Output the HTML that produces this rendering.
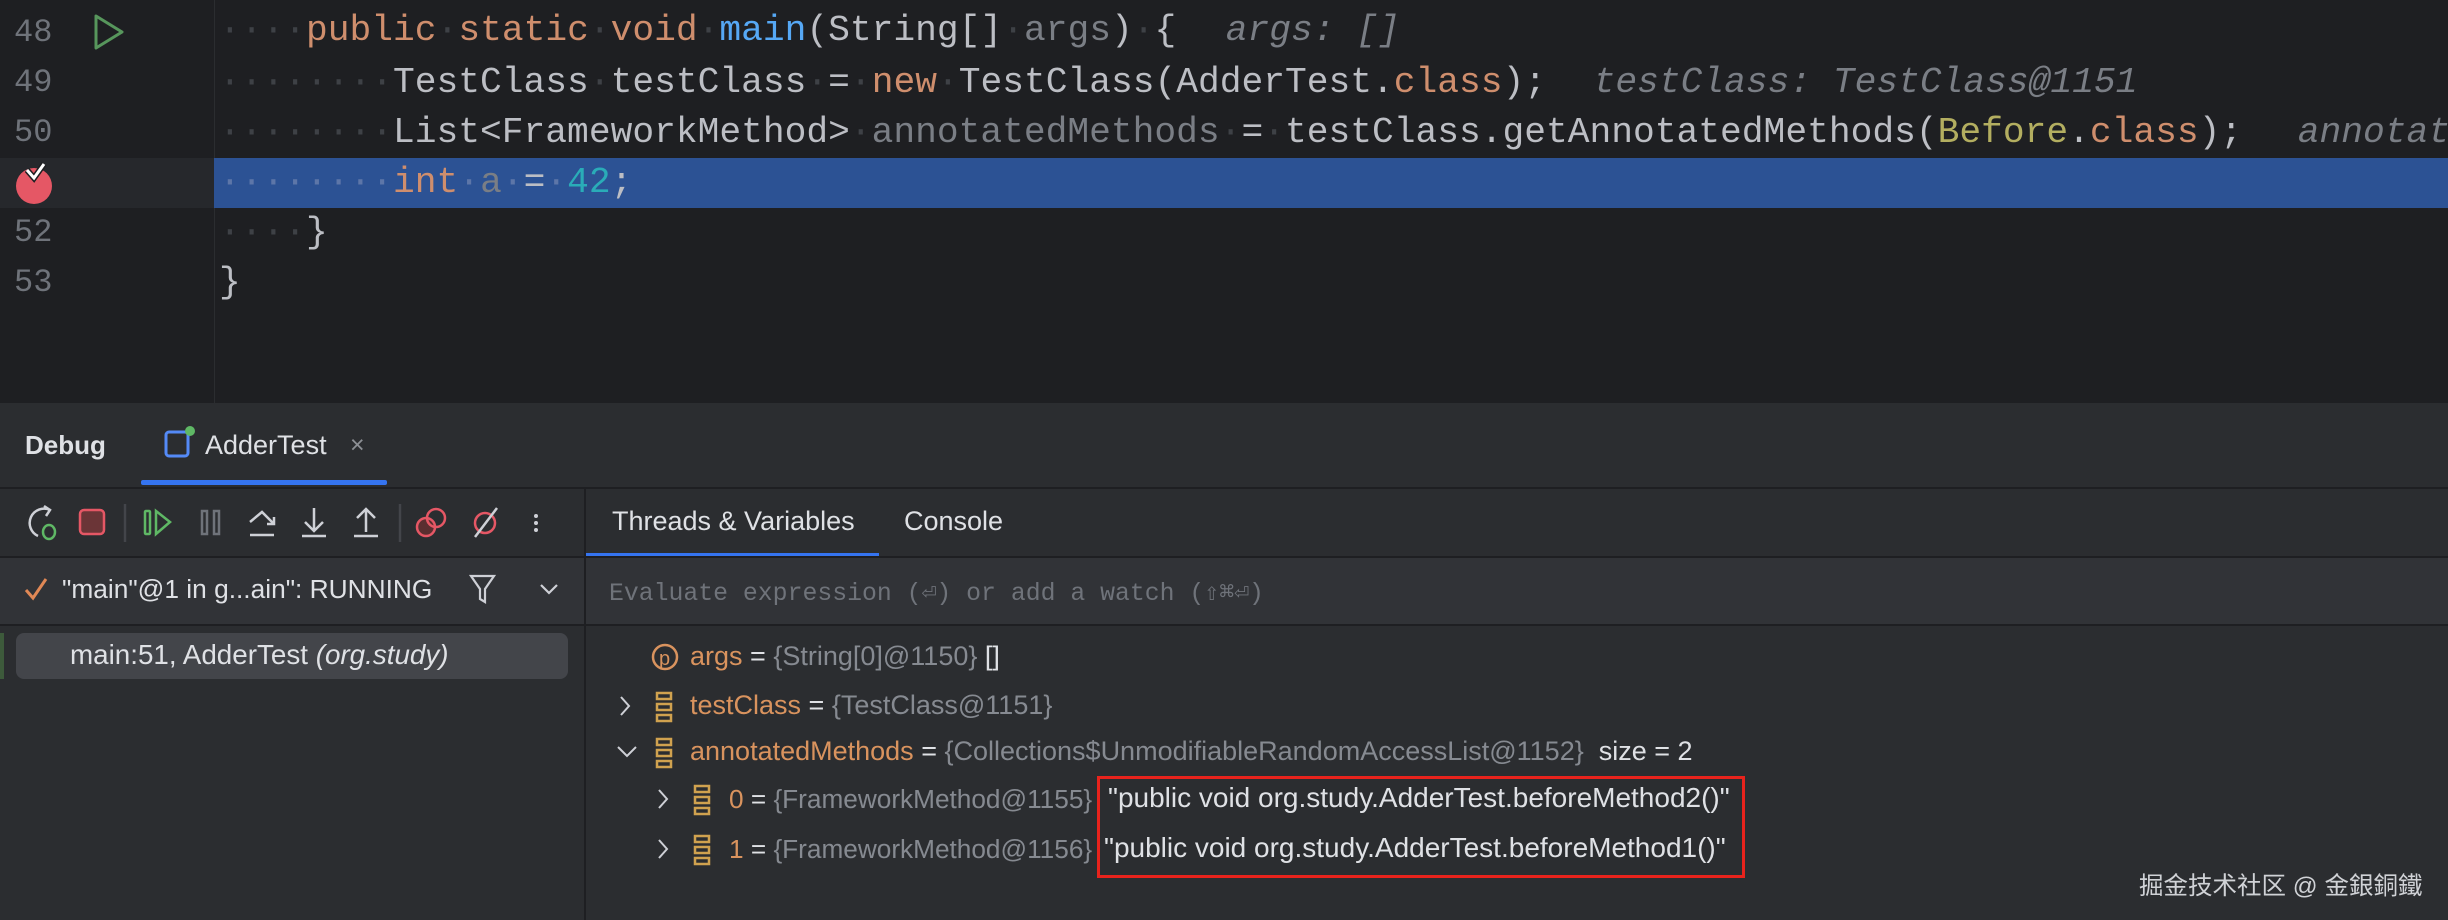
<!DOCTYPE html>
<html><head><meta charset="utf-8"><style>
*{margin:0;padding:0;box-sizing:border-box}
body{width:2448px;height:920px;background:#2b2d30;position:relative;overflow:hidden;font-family:"Liberation Sans","Noto Sans CJK SC",sans-serif}
.ed{position:absolute;left:0;top:0;width:2448px;height:403px;background:#1e1f22;overflow:hidden}
.code{position:absolute;left:219px;font-family:"Liberation Mono",monospace;font-size:36.25px;color:#bcbec4;white-space:pre;line-height:50px;height:50px}
.ln{position:absolute;left:14px;font-family:"Liberation Mono",monospace;font-size:32px;color:#6f737a;line-height:50px}
.k{color:#cf8e6d}.m{color:#56a8f5}.g{color:#7a7e85}.n{color:#2aacb8}.d{color:#3e4146}.h{color:#7a7e85;font-style:italic}.y{color:#b3ae60}
.abs{position:absolute}
.t{position:absolute;font-size:27px;color:#dfe1e5;white-space:nowrap}
.vt{font-size:27px}
.o{color:#d9935e}.v{color:#868a91}
</style></head><body>
<div class="ed">
<div class="abs" style="left:214px;top:0;width:1px;height:403px;background:#2b2d30"></div>
<div class="abs" style="left:214px;top:158px;width:2234px;height:50px;background:#2c5294"></div>
<div class="abs" style="left:0;top:158px;width:214px;height:50px;background:#26282c"></div>
<div class="ln" style="top:8px">48</div>
<div class="ln" style="top:58px">49</div>
<div class="ln" style="top:108px">50</div>
<div class="ln" style="top:208px">52</div>
<div class="ln" style="top:258px">53</div>
<svg class="abs" style="left:92px;top:13px" width="34" height="38"><path d="M4 3 L30 19 L4 35 Z" fill="none" stroke="#57965c" stroke-width="3" stroke-linejoin="round"/></svg>
<svg class="abs" style="left:14px;top:160px" width="44" height="46"><circle cx="20" cy="26" r="18" fill="#e55765"/><path d="M13 10 L20 18 L30 4" fill="none" stroke="#1e1f22" stroke-width="6"/><path d="M13 10 L20 18 L30 4" fill="none" stroke="#fff" stroke-width="3"/></svg>
<div class="code" style="top:6px"><span class="d">····</span><span class="k">public</span><span class="d">·</span><span class="k">static</span><span class="d">·</span><span class="k">void</span><span class="d">·</span><span class="m">main</span>(String[]<span class="d">·</span><span class="g">args</span>)<span class="d">·</span>{  <span class="h" style="margin-left:6px">args: []</span></div>
<div class="code" style="top:58px"><span class="d">········</span>TestClass<span class="d">·</span>testClass<span class="d">·</span>=<span class="d">·</span><span class="k">new</span><span class="d">·</span>TestClass(AdderTest.<span class="k">class</span>);  <span class="h" style="margin-left:4px">testClass: TestClass@1151</span></div>
<div class="code" style="top:108px"><span class="d">········</span>List&lt;FrameworkMethod&gt;<span class="d">·</span><span class="g">annotatedMethods</span><span class="d">·</span>=<span class="d">·</span>testClass.getAnnotatedMethods(<span class="y">Before</span>.<span class="k">class</span>);  <span class="h" style="margin-left:12px">annotatedMethods</span></div>
<div class="code" style="top:158px"><span style="color:#5d76a8">········</span><span class="k">int</span><span style="color:#5d76a8">·</span><span class="g">a</span><span style="color:#5d76a8">·</span>=<span style="color:#5d76a8">·</span><span class="n">42</span>;</div>
<div class="code" style="top:208px"><span class="d">····</span>}</div>
<div class="code" style="top:258px">}</div>
</div>
<div class="t" style="left:25px;top:430px;font-weight:bold;font-size:26px">Debug</div>
<svg class="abs" style="left:163px;top:424px" width="34" height="36"><rect x="3" y="8" width="22" height="24" rx="3" fill="none" stroke="#548af7" stroke-width="3"/><circle cx="27" cy="7" r="5" fill="#5fb865"/></svg>
<div class="t" style="left:205px;top:430px">AdderTest</div>
<div class="t" style="left:350px;top:431px;color:#8c8f94;font-size:25px">×</div>
<div class="abs" style="left:141px;top:480px;width:246px;height:5px;background:#3574f0;border-radius:2px"></div>
<div class="abs" style="left:0;top:487px;width:2448px;height:2px;background:#1e1f22"></div>
<svg class="abs" style="left:22px;top:502px" width="560" height="42" fill="none" stroke-width="2.5">
<path d="M28 8 A12 12 0 1 0 16 34" stroke="#ced0d6"/><path d="M22 4 L28 8 L24 14" stroke="#ced0d6"/><ellipse cx="27" cy="30" rx="6" ry="7" stroke="#5fb865"/>
<rect x="58" y="8" width="24" height="24" rx="4" fill="#6b3537" stroke="#e55765"/>
<line x1="103" y1="2" x2="103" y2="40" stroke="#43454a"/>
<rect x="123" y="9" width="5" height="23" rx="1" stroke="#5fb865"/><path d="M134 9 L148 20 L134 32 Z" stroke="#5fb865"/>
<rect x="180" y="9" width="5" height="23" stroke="#6f737a"/><rect x="192" y="9" width="5" height="23" stroke="#6f737a"/>
<path d="M228 20 L240 10 L252 22 M252 15 L252 22 L245 22 M228 33 L252 33" stroke="#ced0d6"/>
<path d="M292 6 L292 28 M283 20 L292 29 L301 20 M280 34 L304 34" stroke="#ced0d6"/>
<path d="M344 8 L344 30 M335 16 L344 7 L353 16 M332 34 L356 34" stroke="#ced0d6"/>
<line x1="378" y1="2" x2="378" y2="40" stroke="#43454a"/>
<circle cx="404" cy="25" r="9" fill="#5a2e30" stroke="#e55765"/><circle cx="414" cy="16" r="9" stroke="#e55765"/>
<circle cx="463" cy="21" r="10" stroke="#e55765"/><line x1="453" y1="35" x2="475" y2="6" stroke="#ced0d6"/>
<circle cx="514" cy="14" r="2" fill="#ced0d6" stroke="none"/><circle cx="514" cy="21" r="2" fill="#ced0d6" stroke="none"/><circle cx="514" cy="28" r="2" fill="#ced0d6" stroke="none"/>
</svg>
<div class="t" style="left:612px;top:506px">Threads &amp; Variables</div>
<div class="t" style="left:904px;top:506px">Console</div>
<div class="abs" style="left:586px;top:553px;width:293px;height:4px;background:#3574f0"></div>
<div class="abs" style="left:0;top:556px;width:2448px;height:2px;background:#1e1f22"></div>
<div class="abs" style="left:0;top:558px;width:584px;height:66px;background:#313337"></div>
<div class="abs" style="left:586px;top:558px;width:1862px;height:66px;background:#313337"></div>
<div class="abs" style="left:584px;top:489px;width:2px;height:431px;background:#1e1f22"></div>
<div class="abs" style="left:0;top:624px;width:2448px;height:2px;background:#1e1f22"></div>
<svg class="abs" style="left:22px;top:574px" width="30" height="30"><path d="M4 16 L11 24 L24 5" fill="none" stroke="#e08855" stroke-width="3"/></svg>
<div class="t" style="left:62px;top:574px;font-size:26.3px">"main"@1 in g...ain": RUNNING</div>
<svg class="abs" style="left:468px;top:572px" width="30" height="34"><path d="M3 4 L26 4 L17 17 L17 30 L12 27 L12 17 Z" fill="none" stroke="#ced0d6" stroke-width="2.2"/></svg>
<svg class="abs" style="left:538px;top:580px" width="22" height="18"><path d="M3 5 L11 13 L19 5" fill="none" stroke="#ced0d6" stroke-width="2.2"/></svg>
<div class="abs" style="left:609px;top:577px;font-family:'Liberation Mono',monospace;font-size:24.8px;color:#6f737a;white-space:pre">Evaluate expression (⏎) or add a watch (⇧⌘⏎)</div>
<div class="abs" style="left:16px;top:633px;width:552px;height:46px;background:#43454a;border-radius:8px"></div>
<div class="abs" style="left:0;top:633px;width:4px;height:46px;background:#3d5a3b"></div>
<div class="t" style="left:70px;top:639px;font-size:27.8px">main:51, AdderTest <i>(org.study)</i></div>
<svg class="abs" style="left:650px;top:640px" width="32" height="34"><circle cx="15" cy="17" r="12" fill="none" stroke="#d9935e" stroke-width="2.5"/><text x="9" y="25" font-size="20" fill="#d9935e" font-family="Liberation Sans">p</text></svg>
<div class="t vt" style="left:690px;top:641px"><span class="o">args</span> = <span class="v">{String[0]@1150}</span> []</div>
<svg class="abs" style="left:616px;top:693px" width="20" height="26"><path d="M5 4 L13 13 L5 22" fill="none" stroke="#ced0d6" stroke-width="2"/></svg>
<svg class="abs" style="left:653px;top:690px" width="24" height="34"><g fill="none" stroke="#d0a24f" stroke-width="2.5"><rect x="4" y="3" width="14" height="6"/><rect x="4" y="14" width="14" height="6"/><rect x="4" y="25" width="14" height="6"/></g></svg>
<div class="t vt" style="left:690px;top:690px"><span class="o">testClass</span> = <span class="v">{TestClass@1151}</span></div>
<svg class="abs" style="left:614px;top:742px" width="26" height="20"><path d="M4 5 L13 14 L22 5" fill="none" stroke="#ced0d6" stroke-width="2"/></svg>
<svg class="abs" style="left:653px;top:736px" width="24" height="34"><g fill="none" stroke="#d0a24f" stroke-width="2.5"><rect x="4" y="3" width="14" height="6"/><rect x="4" y="14" width="14" height="6"/><rect x="4" y="25" width="14" height="6"/></g></svg>
<div class="t vt" style="left:690px;top:736px"><span class="o">annotatedMethods</span> = <span class="v">{Collections$UnmodifiableRandomAccessList@1152}</span>&nbsp; size = 2</div>
<svg class="abs" style="left:654px;top:786px" width="20" height="26"><path d="M5 4 L13 13 L5 22" fill="none" stroke="#ced0d6" stroke-width="2"/></svg>
<svg class="abs" style="left:691px;top:783px" width="24" height="34"><g fill="none" stroke="#d0a24f" stroke-width="2.5"><rect x="4" y="3" width="14" height="6"/><rect x="4" y="14" width="14" height="6"/><rect x="4" y="25" width="14" height="6"/></g></svg>
<div class="t" style="left:729px;top:784px;font-size:26.2px"><span class="o">0</span> = <span class="v">{FrameworkMethod@1155}</span></div>
<div class="t" style="left:1108px;top:782px;font-size:28px">"public void org.study.AdderTest.beforeMethod2()"</div>
<svg class="abs" style="left:654px;top:836px" width="20" height="26"><path d="M5 4 L13 13 L5 22" fill="none" stroke="#ced0d6" stroke-width="2"/></svg>
<svg class="abs" style="left:691px;top:833px" width="24" height="34"><g fill="none" stroke="#d0a24f" stroke-width="2.5"><rect x="4" y="3" width="14" height="6"/><rect x="4" y="14" width="14" height="6"/><rect x="4" y="25" width="14" height="6"/></g></svg>
<div class="t" style="left:729px;top:834px;font-size:26.2px"><span class="o">1</span> = <span class="v">{FrameworkMethod@1156}</span></div>
<div class="t" style="left:1104px;top:832px;font-size:28px">"public void org.study.AdderTest.beforeMethod1()"</div>
<div class="abs" style="left:1097px;top:776px;width:648px;height:102px;border:3px solid #e8231c"></div>
<div class="t" style="left:2139px;top:867px;color:#d0d2d6;font-size:24.5px">掘金技术社区 @ 金銀銅鐵</div>
</body></html>
